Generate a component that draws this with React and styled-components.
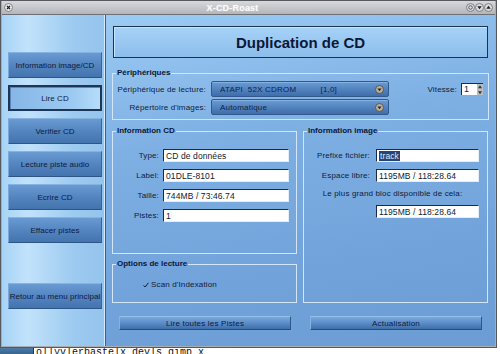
import React from 'react';
import styled, { createGlobalStyle, css } from 'styled-components';

const Global = createGlobalStyle`
  html, body {
    margin: 0;
    padding: 0;
    background: #ffffff;
  }
  body {
    font-family: "Liberation Sans", Arial, sans-serif;
    color: #0e1c3a;
  }
`;

const Screen = styled.div`
  width: 500px;
  height: 354px;
  overflow: hidden;
  display: flex;
  flex-direction: column;
  background: #ffffff;
`;

const Window = styled.div`
  width: 497px;
  height: 348px;
  box-sizing: border-box;
  border: 1px solid #55585c;
  background: #a9acb0;
  padding: 0 1px 1px 1px;
  display: flex;
  flex-direction: column;
`;

const TitleBar = styled.div`
  height: 13px;
  display: flex;
  align-items: center;
  padding: 0 2px 0 2px;
  background: linear-gradient(#d6d8db, #c2c4c7 60%, #b3b5b8);
  border-bottom: 1px solid #6d7074;
`;

const TitleText = styled.div`
  flex: 1;
  text-align: center;
  font-size: 9px;
  font-weight: bold;
  color: #fafbfc;
  letter-spacing: 0.2px;
  text-shadow: 0 0 1px #e2e4e6;
  padding-right: 14px;
`;

const WinKnob = styled.svg`
  width: 9px;
  height: 9px;
  flex: none;
`;

const Body = styled.div`
  flex: 1;
  display: flex;
  min-height: 0;
`;

const Sidebar = styled.nav`
  width: 104px;
  flex: none;
  box-sizing: border-box;
  padding: 37px 0 0 6px;
  display: flex;
  flex-direction: column;
  gap: 7px;
  background: linear-gradient(90deg, #a6d3f6 0%, #c2e2fb 25%, #9ccaf0 70%, #94c3ec 100%);
  border-right: 1px solid #3f5f86;
  box-shadow: inset -1px 0 0 #d4ebfd;
`;

const NavButton = styled.div`
  width: 94px;
  height: 26px;
  box-sizing: border-box;
  display: flex;
  align-items: center;
  justify-content: center;
  white-space: nowrap;
  font-size: 8px;
  letter-spacing: 0.05px;
  color: #0d1b3c;
  background: linear-gradient(#6a9ad2, #5283be 55%, #4474ae);
  border-top: 1px solid #86b2e2;
  border-left: 1px solid #7aa6d8;
  border-bottom: 1px solid #2e5588;
  border-right: 1px solid #3a6296;
  ${(p) =>
    p.$active &&
    css`
      background: linear-gradient(90deg, #86b6e6, #9ccaf2 70%, #b6dcfa);
      border: 2px solid #1d3658;
      box-shadow: inset 1px 1px 0 #5a86b8;
    `}
`;

const NavSpacer = styled.div`
  height: 26px;
`;

const Main = styled.main`
  flex: 1;
  box-sizing: border-box;
  padding: 11px 7px 0 7px;
  display: flex;
  flex-direction: column;
  background: linear-gradient(170deg, #9ccbf3 0%, #7fb0e4 35%, #72a3da 70%, #6b9cd4 100%);
`;

const Heading = styled.h1`
  margin: 0;
  height: 32px;
  box-sizing: border-box;
  display: flex;
  align-items: center;
  justify-content: center;
  font-size: 15px;
  font-weight: bold;
  color: #0b1838;
  border: 1px solid #1c3350;
  background: linear-gradient(#a6d2f7, #8cbdeb);
  box-shadow: inset 1px 1px 0 #c6e4fc;
`;

const Frame = styled.fieldset`
  margin: 0;
  min-width: 0;
  box-sizing: border-box;
  border: 1px solid #d3e6f8;
  padding: 0 2px;
  height: ${(p) => (p.$h ? `${p.$h}px` : 'auto')};
  flex: ${(p) => (p.$grow ? 1 : 'none')};

  legend {
    padding: 0 1px;
    margin-left: 1px;
    font-size: 8px;
    line-height: 10px;
    font-weight: bold;
    color: #0b1838;
  }
`;

const DeviceFrame = styled(Frame)`
  margin: 10px -1px 0;
`;

const DeviceGrid = styled.div`
  display: grid;
  grid-template-columns: 91px 178px 1fr;
  column-gap: 5px;
  row-gap: 2px;
  align-items: center;
  padding: 3px 3px 4px 0;
`;

const FieldLabel = styled.span`
  font-size: 8px;
  letter-spacing: 0.15px;
  color: #0e1c3a;
  text-align: ${(p) => p.$align || 'right'};
  white-space: nowrap;
  grid-column: ${(p) => p.$span || 'auto'};
`;

const Dropdown = styled.div`
  height: 16px;
  box-sizing: border-box;
  display: flex;
  align-items: center;
  padding: 0 4px 0 8px;
  font-size: 8px;
  letter-spacing: 0.2px;
  color: #102246;
  background: linear-gradient(#6a9bd3, #4f80bc 60%, #3f6ea9);
  border: 1px solid #33598c;
  border-radius: 2px;
  box-shadow: inset 0 1px 0 #86b2e2;

  span {
    flex: 1;
    white-space: pre;
  }
`;

const SpeedCell = styled.div`
  display: flex;
  align-items: center;
  justify-content: flex-end;
  gap: 4px;
`;

const Spin = styled.div`
  width: 22px;
  height: 12px;
  box-sizing: border-box;
  display: flex;
  background: #ffffff;
  border-top: 1px solid #1d2d48;
  border-left: 1px solid #1d2d48;
  font-size: 9px;
  line-height: 11px;

  span {
    flex: 1;
    padding-left: 2px;
  }
`;

const SpinArrows = styled.div`
  width: 6px;
  display: flex;
  flex-direction: column;
  background: #b9bcc0;

  svg {
    width: 6px;
    height: 5.5px;
  }
`;

const Columns = styled.div`
  display: grid;
  grid-template-columns: 185px 185px;
  column-gap: 6px;
  margin: 6px 0 0 -1px;
  height: 177px;
`;

const Stack = styled.div`
  display: flex;
  flex-direction: column;
  gap: 5px;
`;

const InfoGrid = styled.div`
  display: grid;
  grid-template-columns: ${(p) => p.$cols};
  column-gap: ${(p) => p.$gap}px;
  row-gap: 7px;
  align-items: center;
  padding-top: 13px;
`;

const Entry = styled.div`
  height: 13px;
  box-sizing: border-box;
  display: flex;
  align-items: center;
  padding-left: 2px;
  font-size: 8.5px;
  letter-spacing: 0.1px;
  color: #0e1a30;
  background: #ffffff;
  border-top: 1px solid #1d2b44;
  border-left: 1px solid #1d2b44;
  border-bottom: 1px solid #e4eef8;
  border-right: 1px solid #e4eef8;
  grid-column: ${(p) => p.$col || 'auto'};
`;

const Selected = styled.span`
  background: #23457a;
  color: #dfe8f4;
  padding: 0 1px;
`;

const CheckRow = styled.div`
  display: flex;
  align-items: center;
  gap: 2px;
  padding: 11px 0 0 28px;
  font-size: 8px;
  letter-spacing: 0.15px;
  color: #0e1c3a;
`;

const ActionRow = styled.div`
  display: grid;
  grid-template-columns: 185px 185px;
  column-gap: 6px;
  margin: 13px 0 0 -1px;
`;

const ActionButton = styled.div`
  margin: 0 6px 0 7px;
  height: 14px;
  box-sizing: border-box;
  display: flex;
  align-items: center;
  justify-content: center;
  font-size: 8px;
  letter-spacing: 0.2px;
  color: #0d1b3c;
  background: linear-gradient(#78a8de, #5a8ac6 55%, #3f6ea8);
  border-top: 1px solid #94c0ec;
  border-left: 1px solid #86b2e2;
  border-bottom: 1px solid #284c7e;
  border-right: 1px solid #2f5688;
`;

const Taskbar = styled.div`
  height: 6px;
  display: flex;
  overflow: hidden;
  background: #ffffff;
`;

const TaskIcon = styled.div`
  width: 33px;
  background: linear-gradient(#4c7cab, #37648f);
  border-right: 1px solid #1e3a5c;
`;

const TaskText = styled.div`
  padding-left: 2px;
  font-family: "Liberation Mono", "DejaVu Sans Mono", monospace;
  font-size: 10px;
  line-height: 10px;
  color: #111111;
  white-space: pre;
`;

const ComboArrow = () => (
  <svg width="9" height="9" viewBox="0 0 9 9">
    <circle cx="4.5" cy="4.5" r="4" fill="#b4b0a6" stroke="#4e4638" strokeWidth="0.8" />
    <path d="M2.4 3.6 L6.6 3.6 L4.5 6.2 Z" fill="#2e281e" />
  </svg>
);

const sidebarItems = [
  'Information image/CD',
  'Lire CD',
  'Verifier CD',
  'Lecture piste audio',
  'Ecrire CD',
  'Effacer pistes',
];

const cdInfo = [
  ['Type:', 'CD de données'],
  ['Label:', '01DLE-8101'],
  ['Taille:', '744MB / 73:46.74'],
  ['Pistes:', '1'],
];

export default function App() {
  return (
    <>
      <Global />
      <Screen>
        <Window>
          <TitleBar>
            <WinKnob viewBox="0 0 9 9">
              <circle cx="4.5" cy="4.5" r="4" fill="#e8e9eb" stroke="#6b6e72" strokeWidth="0.8" />
              <path d="M3 3 L6 6 M6 3 L3 6" stroke="#222" strokeWidth="1.2" />
            </WinKnob>
            <TitleText>X-CD-Roast</TitleText>
            <WinKnob viewBox="0 0 9 9">
              <circle cx="4.5" cy="4.5" r="4" fill="#d8dadd" stroke="#6b6e72" strokeWidth="0.8" />
              <circle cx="4.5" cy="4.5" r="1.8" fill="none" stroke="#444" strokeWidth="0.8" />
            </WinKnob>
            <WinKnob viewBox="0 0 9 9">
              <circle cx="4.5" cy="4.5" r="4" fill="#d8dadd" stroke="#6b6e72" strokeWidth="0.8" />
              <path d="M2.3 3.3 L6.7 3.3 L4.5 6.3 Z" fill="#222" />
            </WinKnob>
            <WinKnob viewBox="0 0 9 9">
              <circle cx="4.5" cy="4.5" r="4" fill="#d8dadd" stroke="#6b6e72" strokeWidth="0.8" />
              <path d="M2.3 5.7 L6.7 5.7 L4.5 2.7 Z" fill="#222" />
            </WinKnob>
          </TitleBar>
          <Body>
            <Sidebar>
              {sidebarItems.map((label) => (
                <NavButton key={label} $active={label === 'Lire CD'}>
                  {label}
                </NavButton>
              ))}
              <NavSpacer />
              <NavButton>Retour au menu principal</NavButton>
            </Sidebar>
            <Main>
              <Heading>Duplication de CD</Heading>
              <DeviceFrame>
                <legend>Périphériques</legend>
                <DeviceGrid>
                  <FieldLabel>Périphérique de lecture:</FieldLabel>
                  <Dropdown>
                    <span>{'ATAPI  52X CDROM          [1,0]'}</span>
                    <ComboArrow />
                  </Dropdown>
                  <SpeedCell>
                    <FieldLabel>Vitesse:</FieldLabel>
                    <Spin>
                      <span>1</span>
                      <SpinArrows>
                        <svg viewBox="0 0 6 5.5">
                          <path d="M1 4.2 L5 4.2 L3 1.3 Z" fill="#333" />
                        </svg>
                        <svg viewBox="0 0 6 5.5">
                          <path d="M1 1.3 L5 1.3 L3 4.2 Z" fill="#333" />
                        </svg>
                      </SpinArrows>
                    </Spin>
                  </SpeedCell>
                  <FieldLabel>Répertoire d'images:</FieldLabel>
                  <Dropdown>
                    <span>Automatique</span>
                    <ComboArrow />
                  </Dropdown>
                </DeviceGrid>
              </DeviceFrame>
              <Columns>
                <Stack>
                  <Frame $h={128}>
                    <legend>Information CD</legend>
                    <InfoGrid $cols="44px 126px" $gap={4}>
                      {cdInfo.map(([label, value]) => (
                        <React.Fragment key={label}>
                          <FieldLabel>{label}</FieldLabel>
                          <Entry>{value}</Entry>
                        </React.Fragment>
                      ))}
                    </InfoGrid>
                  </Frame>
                  <Frame $grow>
                    <legend>Options de lecture</legend>
                    <CheckRow>
                      <svg width="6" height="6" viewBox="0 0 6 6">
                        <path d="M0.6 3.4 L2.2 5 L5.4 0.8" fill="none" stroke="#0e1c3a" strokeWidth="1" />
                      </svg>
                      Scan d'Indexation
                    </CheckRow>
                  </Frame>
                </Stack>
                <Frame>
                  <legend>Information image</legend>
                  <InfoGrid $cols="64px 103px" $gap={6}>
                    <FieldLabel>Prefixe fichier:</FieldLabel>
                    <Entry>
                      <Selected>track</Selected>
                    </Entry>
                    <FieldLabel>Espace libre:</FieldLabel>
                    <Entry>1195MB / 118:28.64</Entry>
                    <FieldLabel $align="center" $span="1 / 3">
                      Le plus grand bloc disponible de cela:
                    </FieldLabel>
                    <Entry $col="2">1195MB / 118:28.64</Entry>
                  </InfoGrid>
                </Frame>
              </Columns>
              <ActionRow>
                <ActionButton>Lire toutes les Pistes</ActionButton>
                <ActionButton>Actualisation</ActionButton>
              </ActionRow>
            </Main>
          </Body>
        </Window>
        <Taskbar>
          <TaskIcon />
          <TaskText>ollyvlerbastelx devls gimp x</TaskText>
        </Taskbar>
      </Screen>
    </>
  );
}
